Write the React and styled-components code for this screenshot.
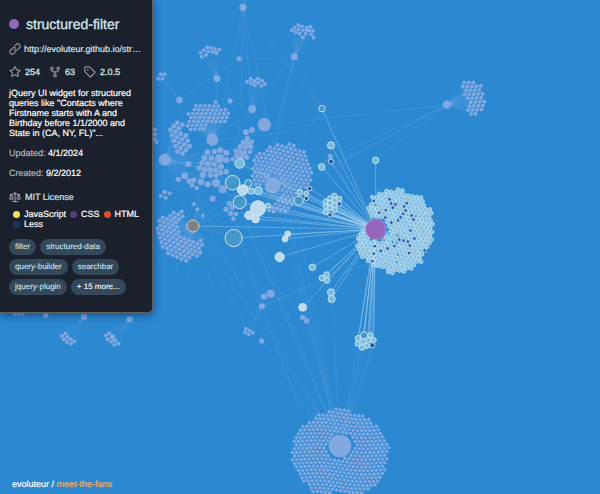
import React from 'react';
import styled, { createGlobalStyle } from 'styled-components';
import { GoLink, GoStar, GoRepoForked, GoTag, GoLaw } from 'react-icons/go';

const GlobalStyle = createGlobalStyle`
  *, *::before, *::after { box-sizing: border-box; }
  body {
    margin: 0;
    background: #2b88d1;
    font-family: "Liberation Sans", Arial, sans-serif;
    font-size: 9px;
    line-height: 10px;
    color: #fff;
    text-rendering: geometricPrecision;
  }
`;

const Page = styled.div`
  position: relative;
  min-height: 100vh;
  overflow: hidden;
  display: flex;
  flex-direction: column;
  justify-content: space-between;
  align-items: flex-start;
`;

const Graph = styled.svg`
  position: absolute;
  inset: 0;
  width: 100%;
  height: 100%;
`;

const Card = styled.aside`
  position: relative;
  width: 153px;
  padding: 16px 8px 17px 9px;
  display: flex;
  flex-direction: column;
  background: #1a202c;
  border: 1px solid #66625f;
  border-width: 0 1px 1px 0;
  border-bottom-right-radius: 5px;
  box-shadow: 0 2px 8px rgba(10, 20, 50, 0.55);
`;

const Title = styled.h1`
  margin: 0;
  display: flex;
  align-items: center;
  gap: 7px;
  font-size: 14px;
  line-height: 16px;
  font-weight: 400;
  color: #d3e9f0;
  -webkit-text-stroke: 0.3px currentColor;
`;

const Dot = styled.span`
  flex: none;
  width: ${(p) => p.$size}px;
  height: ${(p) => p.$size}px;
  border-radius: 50%;
  background: ${(p) => p.$color};
`;

const SiteLink = styled.a`
  margin-top: 11px;
  display: flex;
  align-items: center;
  gap: 3px;
  line-height: 12px;
  color: #cfe6ee;
  text-decoration: none;
  -webkit-text-stroke: 0.2px currentColor;
  svg { flex: none; color: #a9adb4; stroke: currentColor; stroke-width: 0.4; }
`;

const Stats = styled.div`
  margin-top: 11px;
  display: flex;
  gap: 9px;
`;

const Stat = styled.a`
  display: flex;
  align-items: center;
  gap: 4px;
  line-height: 12px;
  color: #d0e4ea;
  text-decoration: none;
  -webkit-text-stroke: 0.3px currentColor;
  svg { color: #a9adb4; stroke: currentColor; stroke-width: 0.4; }
`;

const Description = styled.p`
  margin: 10px 0 0;
  padding-right: 8px;
  -webkit-text-stroke: 0.2px currentColor;
`;

const Meta = styled.div`
  margin-top: 10px;
  -webkit-text-stroke: 0.2px currentColor;
  span { color: #b4b6bb; }
`;

const License = styled.a`
  margin-top: 13px;
  display: flex;
  align-items: center;
  gap: 4px;
  line-height: 12px;
  color: #cfe6ee;
  text-decoration: none;
  -webkit-text-stroke: 0.2px currentColor;
  svg { color: #b4b6bb; stroke: currentColor; stroke-width: 0.4; }
`;

const Languages = styled.ul`
  margin: 6px 0 0;
  padding: 0 0 0 4px;
  list-style: none;
  display: flex;
  flex-wrap: wrap;
  column-gap: 4px;
`;

const Language = styled.li`
  display: flex;
  align-items: center;
  gap: 4px;
  -webkit-text-stroke: 0.2px currentColor;
`;

const Tags = styled.div`
  margin-top: 10px;
  display: flex;
  flex-wrap: wrap;
  gap: 4px;
`;

const Tag = styled.button`
  height: 16px;
  padding: 0 6px;
  border: 0;
  border-radius: 8px;
  background: #344859;
  color: ${(p) => (p.$more ? '#fff' : '#cfe6ee')};
  font: inherit;
  font-size: 8px;
  line-height: 16px;
  text-rendering: inherit;
  -webkit-text-stroke: 0.1px currentColor;
`;

const Footer = styled.footer`
  position: relative;
  padding: 0 12px 5px;
  -webkit-text-stroke: 0.2px currentColor;
`;

const FooterLink = styled.a`
  color: ${(p) => (p.$accent ? '#f3ae62' : '#fff')};
  text-decoration: none;
`;

const COLORS = { lav: '#82a8df', light: '#79bbdf', teal: '#4596c9', pale: '#bfdaee', navy: '#2153ab' };
const MAIN = [375.7, 229.3];

// Node lists are stored in units of a third of a pixel around an origin.
const place = (ox, oy, list, r = 6) =>
  list.map(([x, y, s, c]) => ({ x: ox + x / 3, y: oy + y / 3, r: (s || r) / 3, c: c || 'lav' }));

const inside = (x, y, poly) => {
  let hit = false;
  for (let i = 0, j = poly.length - 1; i < poly.length; j = i++) {
    const [xi, yi] = poly[i];
    const [xj, yj] = poly[j];
    if (yi > y !== yj > y && x < ((xj - xi) * (y - yi)) / (yj - yi) + xi) hit = !hit;
  }
  return hit;
};

// Fills a polygon with a gently warped hexagonal packing that leaves the hub free.
const pack = (ox, oy, poly, gap, r, hub, angle = 0) => {
  const out = [];
  const xs = poly.map((p) => p[0]);
  const ys = poly.map((p) => p[1]);
  const cx = (Math.min(...xs) + Math.max(...xs)) / 2;
  const cy = (Math.min(...ys) + Math.max(...ys)) / 2;
  const cos = Math.cos(angle);
  const sin = Math.sin(angle);
  for (let j = -40; j <= 40; j++) {
    for (let i = -40; i <= 40; i++) {
      const u = (i + (j & 1) / 2) * gap;
      const v = j * gap * 0.87;
      const x = cx + u * cos - v * sin + 3 * Math.sin(v / 40);
      const y = cy + u * sin + v * cos + 4 * Math.sin(u / 35);
      if (!inside(x, y, poly)) continue;
      if (hub && Math.hypot(x - hub[0], y - hub[1]) < hub[2]) continue;
      out.push([x, y, r]);
    }
  }
  return place(ox, oy, out);
};

const top1 = place(150, 0, [[425,91],[434,83],[445,75],[437,96],[446,88],[456,79],[449,100],[459,91],[470,83],[458,112],[467,101],[471,91],[481,80],[477,92],[489,92],[484,103],[491,113]], 5.8);
const top2 = place(150, 0, [[152,158],[155,170],[162,151],[171,142],[168,165],[175,154],[183,143],[188,156],[195,147],[200,159],[208,149]], 5.8);
const top3 = place(150, 0, [[291,245],[302,237],[303,250],[313,243],[314,256],[324,236],[324,248],[334,257],[336,242],[345,252]], 6);
const top4 = place(150, 0, [[24,236],[32,223],[37,236],[44,223]], 6);
const dome = pack(150, 90, [[113,68],[148,38],[198,36],[207,52],[230,54],[241,82],[225,100],[192,98],[165,108],[158,127],[130,129],[112,107]], 13.4, 5.8, null, -0.08);
const wedge = pack(150, 90, [[42,118],[75,90],[100,103],[102,130],[118,148],[122,177],[105,193],[80,186],[62,157],[63,128]], 16, 7.4, null, 0.25);
const mid = place(150, 90, [[172,187,9],[193,185,8],[211,180,9],[229,188,9],[163,204,9],[184,205,9],[229,211,9],[156,219,8],[174,222,9],[193,223,8],[213,230,9],[148,234,8],[164,238,8],[180,240,9],[197,240,8],[212,248,8],[159,255,10],[182,256,8],[199,256,8],[229,245,8],[153,276,10],[173,283,9],[198,279,13],[218,298,12],[115,222,9],[104,257,10],[85,268,8],[117,273,8],[131,271,8],[126,286,7],[140,294,7]]);
const ribbon = place(150, 90, [[288,127,9],[306,120,9],[292,145,8],[280,157,8],[293,160,8],[305,155,7],[271,170,8],[286,172,8],[302,170,8],[257,182,7],[270,185,8],[284,188,8],[300,186,7],[275,200,8],[290,202,8],[248,208,7],[260,197,8]]);
const bigMid = pack(150, 90, [[307,212],[328,188],[368,166],[400,160],[435,164],[450,176],[466,188],[479,210],[487,262],[480,288],[445,310],[432,348],[402,368],[358,365],[348,350],[378,338],[390,322],[378,312],[325,292],[302,265]], 13.4, 5.7, [368, 287, 31], 0.18);
const moon = pack(150, 90, [[55,368],[98,362],[98,386],[80,400],[87,428],[105,447],[158,448],[163,468],[142,503],[95,518],[57,498],[26,465],[16,435],[26,392]], 14, 6.3, null, 0.3);
const right = pack(430, 60, [[88,72],[122,61],[147,70],[163,92],[165,130],[158,157],[128,168],[110,150],[116,135],[103,103],[97,84]], 13.6, 6, null, -0.15);
const bottom = pack(280, 400, [[122,40],[175,22],[207,32],[232,40],[273,58],[293,83],[312,106],[327,133],[323,190],[305,236],[275,268],[250,279],[98,279],[72,246],[44,212],[36,180],[38,130],[50,98],[75,72]], 12.6, 5.4, [180, 138, 39], 0.05);
const left1 = place(0, 300, [[196,100],[186,107],[202,111],[191,118],[212,118],[201,126],[223,124],[213,131]], 5.8);
const left2 = place(0, 300, [[328,100],[318,106],[337,111,8],[323,118],[346,121],[334,125],[355,131],[343,134]], 5.8);
const tiny = place(230, 260, [[47,206],[58,211],[45,217],[56,223],[68,218]], 5.8);
const strays = [
  ...place(150, 0, [[279,22,11],[433,170,10.5],[201,236,10],[307,327,12],[88,300,9.5],[267,176,7.5],[240,303,8],[343,374,20]]),
  ...place(150, 90, [[187,149,18],[44,209,18],[209,206,14],[368,287,24],[32,318],[44,306,7],[47,323],[59,310],[132,342],[142,358],[158,377],[188,326,9],[238,341,8],[228,358,8],[247,352,8],[242,370,8],[258,372,7],[250,386,7],[14,118],[15,133],[13,147],[19,156]], 6),
  ...place(430, 60, [[51,134,12.5]]),
  ...place(280, 400, [[180,138,34]]),
  ...place(230, 260, [[122,101,12],[102,110,9],[96,139,9],[95,243,8],[218,172,8],[230,183,8]]),
  ...place(300, 90, [[91,199,7.5]]),
  ...place(0, 300, [[252,50,9.5],[389,58,9.5],[137,46,8],[44,42],[56,42],[68,41]], 5.6),
];

const loose = [
  ...place(150, 90, [[269,220,15,'light'],[295,280,11,'teal'],[248,278,22,'teal'],[303,303,10,'light'],[325,302,12,'light'],[278,300,16,'pale'],[269,336,20,'teal'],[297,376,13,'pale'],[317,387,12,'pale'],[324,355,23,'pale'],[354,347,8,'light'],[251,444,26,'teal'],[446,332,14,'teal'],[450,307,9,'light'],[469,310,7,'light'],[479,296,7,'navy'],[469,325,7,'navy'],[405,447,9,'pale'],[413,432,9,'pale'],[389,501,14,'pale'],[487,532,10,'light'],[515,231,10,'light'],[516,56,10,'teal']]),
  ...place(300, 90, [[93,166,11,'light'],[93,215,8,'navy'],[227,211,10,'light'],[103,317,8,'light'],[90,325,8,'light'],[118,326,8,'light'],[77,335,8,'light'],[104,331,8,'light'],[90,339,8,'light'],[118,342,7,'navy'],[104,346,8,'light'],[77,350,8,'light'],[90,354,8,'light'],[104,360,8,'light'],[77,366,8,'light'],[90,375,7,'navy']]),
  ...place(230, 260, [[290,44,9,'light'],[276,54,9,'light'],[291,61,9,'light'],[303,97,11,'light'],[305,117,11,'light'],[218,142,12,'pale'],[402,226,11,'teal'],[421,226,8,'light'],[384,235,9,'light'],[400,245,8,'light'],[415,241,8,'light'],[431,240,8,'light'],[383,251,8,'light'],[427,256,8,'navy'],[411,258,8,'light'],[396,262,9,'light']]),
];

const fans = pack(340, 170, [[80,120],[95,82],[128,62],[180,57],[203,66],[238,72],[250,95],[274,122],[282,187],[266,238],[243,278],[207,302],[150,310],[102,290],[66,264],[50,225],[52,193],[62,172],[90,140]], 13, 5.8, [107, 178, 35], 0.12);
fans.forEach((n) => { n.c = 'light'; });
const tint = (color, list) => list.forEach(([x, y]) => {
  let best = fans[0];
  let d = Infinity;
  fans.forEach((n) => {
    const e = Math.hypot(n.x - 340 - x / 3, n.y - 170 - y / 3);
    if (e < d) { d = e; best = n; }
  });
  best.c = color;
});
tint('teal', [[110,101],[222,136],[148,185],[172,198],[132,210],[171,219],[160,215],[170,257],[170,270]]);
tint('navy', [[103,88],[151,90],[149,102],[171,101],[205,103],[132,118],[141,126],[111,130],[134,149],[155,161],[179,155],[184,145],[186,132],[198,128],[210,137],[219,150],[215,183],[230,203],[180,208],[192,207],[200,217],[159,230],[207,227],[253,235],[102,226],[118,241],[138,238],[96,247],[128,246],[102,271],[208,250],[192,104],[158,110],[170,148]]);

const spokes = (hub, nodes) => nodes.map((n) => `M${hub[0]} ${hub[1]}L${n.x} ${n.y}`).join('');
const faint = [
  spokes([294.5, 56.5], top1), spokes([217, 78.7], top2), spokes([252.3, 109], top3), spokes([179.3, 100], top4),
  spokes([212.3, 139.7], dome), spokes([164.7, 159.7], wedge), spokes([219.7, 158.7], mid), spokes([164.7, 159.7], mid),
  spokes([272.7, 185.7], ribbon), spokes([193, 225.7], moon), spokes([447, 104.7], right),
  spokes([84, 316.7], left1), spokes([129.7, 319.3], left2), spokes([262, 306.3], tiny), spokes([272.7, 185.7], bigMid),
].join('');
const web = [
  [243,7,218,128],[243,7,241,110],[243,7,252,109],[243,7,322,108],[243,7,238,-4],[243,7,241,-4],[243,7,246,-4],[243,7,248,-4],
  [294,57,239,59],[294,57,252,109],[294,57,276,130],[294,57,270,170],[294,57,322,108],[239,59,179,100],[217,79,264,125],[217,79,215,140],
  [179,100,184,130],[230,101,240,130],[252,109,212,140],[252,109,230,150],[252,109,290,160],[264,125,447,105],[272,186,447,105],[255,206,447,105],[376,160,447,105],[310,180,447,105],
  [212,140,340,446],[165,160,340,446],[193,226,340,446],[220,160,340,446],[273,186,340,446],[264,125,340,446],[290,180,340,446],[240,190,340,446],[262,306,300,410],[262,341,330,446],[307,321,340,446],[332,299,340,446],
  [193,226,165,160],[193,226,212,140],[193,226,220,159],[193,226,273,186],[193,226,240,190],[193,226,262,306],[193,226,264,297],[193,226,238,237],[193,226,235,152],[193,226,200,198],[193,226,248,331],
  [165,160,212,140],[165,160,273,186],[165,160,240,200],[165,160,270,300],[165,160,303,317],[212,140,273,186],[212,140,290,132],[212,140,262,306],[220,159,264,125],[273,186,330,158],[273,186,322,108],[243,7,340,446],[222,180,376,229],[262,306,376,260],[262,306,325,278],[193,226,188,284],[193,226,176,270],[193,226,213,290],[193,226,155,262],
  [376,341,340,446],[366,344,340,446],[372,347,340,446],[361,347,340,446],[359,338,340,446],[340,446,306,405],[340,446,314,405],
].map(([a, b, c, d]) => `M${a} ${b}L${c} ${d}`).join('');

const Nodes = ({ nodes, ringed }) => nodes.map((n, i) => (
  <circle
    key={i}
    cx={n.x}
    cy={n.y}
    r={ringed ? n.r - 0.1 : n.r}
    fill={COLORS[n.c]}
    stroke={ringed ? '#cfe7f4' : 'none'}
    strokeWidth={n.r > 4 ? 1 : 0.9}
  />
));

const Network = () => (
  <Graph viewBox="0 0 600 494" preserveAspectRatio="xMinYMin slice" aria-hidden="true">
    <path d={web} stroke="#a9c8ee" strokeOpacity="0.17" strokeWidth="0.7" />
    <path d={faint} stroke="#a9c8ee" strokeOpacity="0.12" strokeWidth="0.7" />
    <Nodes nodes={[...top1, ...top2, ...top3, ...top4, ...dome, ...wedge, ...mid, ...ribbon, ...bigMid, ...moon, ...right, ...bottom, ...left1, ...left2, ...tiny, ...strays]} />
    <path d={spokes(MAIN, loose) + `M193 226L${MAIN[0]} ${MAIN[1]}`} stroke="#a5d0ee" strokeOpacity="0.5" strokeWidth="0.9" />
    <Nodes nodes={loose} ringed />
    <Nodes nodes={fans} ringed />
    <circle cx="193" cy="226" r="6" fill="#7f7f80" stroke="#dccbbd" strokeWidth="1" />
    <circle cx={MAIN[0]} cy={MAIN[1]} r="10.3" fill="#9467bd" stroke="#b9a0d9" strokeWidth="0.7" />
  </Graph>
);

const LANGUAGES = [['JavaScript', '#f1e05a'], ['CSS', '#563d7c'], ['HTML', '#e34c26'], ['Less', '#1d365d']];
const TAGS = ['filter', 'structured-data', 'query-builder', 'searchbar', 'jquery-plugin'];

export default function App() {
  return (
    <Page>
      <GlobalStyle />
      <Network />
      <Card>
        <Title><Dot $size={10} $color="#9467bd" />structured-filter</Title>
        <SiteLink href="#site"><GoLink size={12} /><span>http://evoluteur.github.io/str…</span></SiteLink>
        <Stats>
          <Stat href="#stars"><GoStar size={12} />254</Stat>
          <Stat href="#forks"><GoRepoForked size={12} />63</Stat>
          <Stat href="#releases"><GoTag size={12} />2.0.5</Stat>
        </Stats>
        <Description>
          jQuery UI widget for structured queries like "Contacts where Firstname starts with A and Birthday before 1/1/2000 and State in (CA, NY, FL)"...
        </Description>
        <Meta><span>Updated:</span> 4/1/2024</Meta>
        <Meta><span>Created:</span> 9/2/2012</Meta>
        <License href="#license"><GoLaw size={12} />MIT License</License>
        <Languages>
          {LANGUAGES.map(([name, color]) => (
            <Language key={name}><Dot $size={7} $color={color} />{name}</Language>
          ))}
        </Languages>
        <Tags>
          {TAGS.map((t) => <Tag key={t} type="button">{t}</Tag>)}
          <Tag type="button" $more>+ 15 more...</Tag>
        </Tags>
      </Card>
      <Footer>
        <FooterLink href="#owner">evoluteur</FooterLink> / <FooterLink href="#repo" $accent>meet-the-fans</FooterLink>
      </Footer>
    </Page>
  );
}
